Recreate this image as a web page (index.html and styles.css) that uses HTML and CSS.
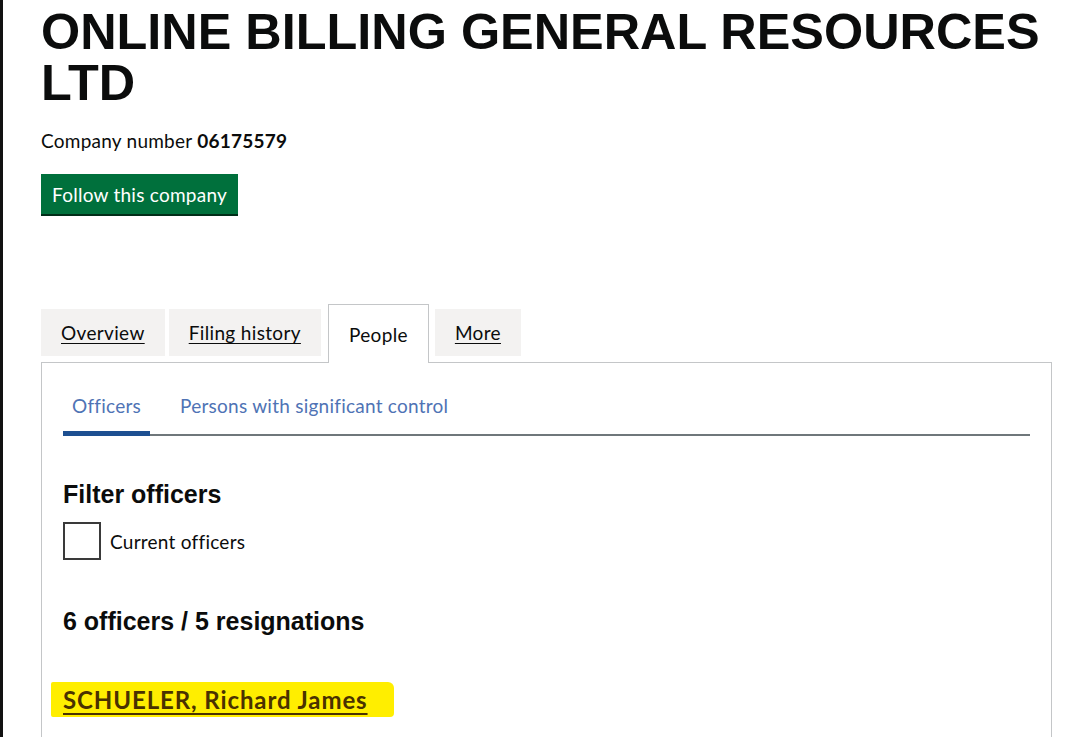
FILE: index.html
```html
<!DOCTYPE html>
<html lang="en">
<head>
    <meta charset="UTF-8">
    <meta name="viewport" content="width=device-width, initial-scale=1.0">
    <title>ONLINE BILLING GENERAL RESOURCES LTD - People</title>
    <link rel="stylesheet" href="styles.css">
</head>
<body>
    <div class="page">
        <h1 class="company-name">ONLINE BILLING GENERAL RESOURCES LTD</h1>
        <p class="company-number">Company number <strong>06175579</strong></p>
        <button class="follow-button">Follow this company</button>

        <ul class="tabs">
            <li class="tab"><a href="#">Overview</a></li>
            <li class="tab"><a href="#">Filing history</a></li>
            <li class="tab selected"><span>People</span></li>
            <li class="tab"><a href="#">More</a></li>
        </ul>

        <div class="panel">
            <ul class="sub-tabs">
                <li class="sub-tab active"><a href="#">Officers</a></li>
                <li class="sub-tab"><a href="#">Persons with significant control</a></li>
            </ul>

            <h2 class="section-heading">Filter officers</h2>
            <label class="checkbox">
                <span class="checkbox-box"></span>
                <span class="checkbox-label">Current officers</span>
            </label>

            <h2 class="section-heading officer-count">6 officers / 5 resignations</h2>

            <div class="officer">
                <a href="#" class="officer-name"><mark>SCHUELER, Richard James</mark></a>
            </div>
        </div>
    </div>
</body>
</html>
```

FILE: styles.css
```css
* {
    margin: 0;
    padding: 0;
    box-sizing: border-box;
}

body {
    background-color: #fff;
    color: #0b0c0c;
    font-family: Lato, "Noto Sans", sans-serif;
    font-size: 19px;
    line-height: 25px;
    letter-spacing: 0.25px;
    border-left: 3px solid #111;
    min-height: 737px;
}

.page {
    width: 1049px;
    padding-left: 38px;
}

.company-name {
    font-family: "Liberation Sans", Arial, sans-serif;
    font-size: 50.4px;
    line-height: 51px;
    font-weight: bold;
    letter-spacing: 0;
    margin-top: 6px;
}

.company-number {
    margin-top: 20px;
}

.follow-button {
    margin-top: 21px;
    font-family: inherit;
    font-size: 19px;
    line-height: 25px;
    letter-spacing: inherit;
    padding: 8px 11px 7px;
    color: #fff;
    background-color: #00703c;
    border: none;
    border-radius: 0;
    box-shadow: 0 2px 0 #002d18;
    cursor: pointer;
}

/* top level tabs */
.tabs {
    list-style: none;
    display: flex;
    align-items: flex-start;
    margin-top: 90px;
}

.tab {
    margin-top: 5px;
    margin-right: 4px;
    padding: 11px 20px;
    background-color: #f3f2f1;
    letter-spacing: 0.35px;
}

.tab a {
    color: #0b0c0c;
    text-decoration: underline;
    text-underline-offset: 3px;
}

.tab.selected {
    margin-top: 0;
    margin-left: 3px;
    margin-right: 6px;
    margin-bottom: -1px;
    padding: 17px 20px 16px;
    background-color: #fff;
    border: 1px solid #c4c6c8;
    border-bottom: none;
    position: relative;
    z-index: 1;
}

.panel {
    border: 1px solid #c4c6c8;
    padding: 30px 21px 40px;
}

/* officers / psc switch */
.sub-tabs {
    list-style: none;
    display: flex;
    border-bottom: 2px solid #6f777b;
}

.sub-tab {
    margin-right: 21px;
    margin-bottom: -2px;
    padding: 0 9px 13px;
    border-bottom: 5px solid transparent;
}

.sub-tab a {
    color: #4f73b5;
    text-decoration: none;
}

.sub-tab.active {
    border-bottom-color: #1d4f91;
}

.section-heading {
    font-family: "Liberation Sans", Arial, sans-serif;
    font-size: 25px;
    line-height: 30px;
    font-weight: bold;
    letter-spacing: 0;
    margin-top: 43px;
}

.checkbox {
    display: flex;
    align-items: center;
    gap: 9px;
    margin-top: 13px;
}

.checkbox-box {
    width: 38px;
    height: 38px;
    border: 2px solid #3a3a3a;
}

.officer-count {
    margin-top: 46px;
}

.officer {
    margin-top: 51px;
}

.officer-name {
    font-size: 24px;
    font-weight: bold;
    letter-spacing: 0.9px;
    color: #4a3200;
    text-decoration: underline;
    text-underline-offset: 4px;
}

.officer-name mark {
    background-color: #ffee00;
    color: inherit;
    padding: 3px 26px 3px 12px;
    margin-left: -12px;
    border-radius: 2px 6px 4px 2px;
}
```
